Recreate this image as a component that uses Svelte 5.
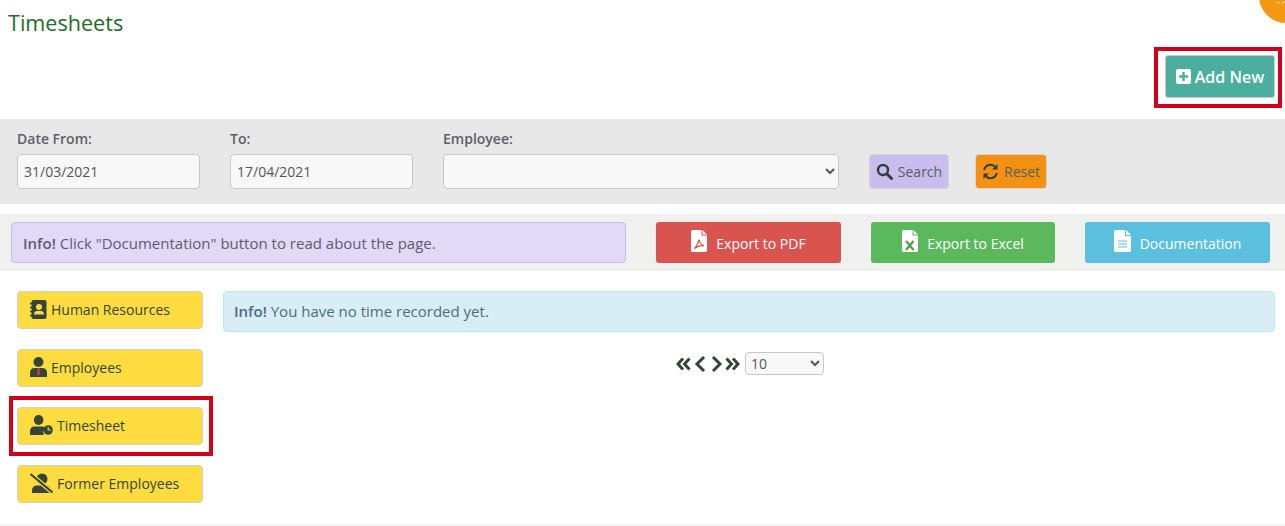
<script>
	const sideItems = [
		{ label: 'Human Resources', icon: 'book', marked: false },
		{ label: 'Employees', icon: 'tie', marked: false },
		{ label: 'Timesheet', icon: 'clock', marked: true },
		{ label: 'Former Employees', icon: 'slash', marked: false }
	];
</script>

<div class="page">
	<span class="badge">
		<svg width="12" height="6" viewBox="0 0 12 6" fill="none" stroke="#fbdc8a" stroke-width="1">
			<path d="M1 1.500l2 2 2-2M6 3.500h2l1-2 2 2" />
		</svg>
	</span>

	<h1 class="title">Timesheets</h1>

	<div class="actions">
		<div class="marked">
			<button class="add-btn">
				<svg width="15" height="15" viewBox="0 0 15 15">
					<rect width="15" height="15" rx="2" fill="#fff" />
					<path d="M6.300 3h2.400v3.300H12v2.400H8.700V12H6.300V8.700H3V6.300h3.300z" fill="#4cae9f" />
				</svg>
				Add New
			</button>
			<span class="mark mark-add"></span>
		</div>
	</div>

	<form class="filters">
		<div class="field date">
			<label for="from">Date From:</label>
			<input id="from" value="31/03/2021" />
		</div>
		<div class="field date">
			<label for="to">To:</label>
			<input id="to" value="17/04/2021" />
		</div>
		<div class="field employee">
			<label for="emp">Employee:</label>
			<select id="emp"><option></option></select>
		</div>
		<button type="button" class="filter-btn search">
			<svg width="17" height="17" viewBox="0 0 17 17" fill="none" stroke="#33403a">
				<circle cx="7" cy="7" r="5" stroke-width="2.400" />
				<path d="M10.800 10.800 15.500 15.500" stroke-width="3" stroke-linecap="round" />
			</svg>
			Search
		</button>
		<button type="button" class="filter-btn reset">
			<svg width="17" height="17" viewBox="0 0 17 17" fill="none" stroke="#33403a" stroke-width="2">
				<path d="M2.200 7A6.400 6.400 0 0 1 13.400 4.200" />
				<path d="M14.800 10A6.400 6.400 0 0 1 3.600 12.800" />
				<path d="M15.500 1v5.500H10z" fill="#33403a" stroke="none" />
				<path d="M1.500 16v-5.500H7z" fill="#33403a" stroke="none" />
			</svg>
			Reset
		</button>
	</form>

	<div class="toolbar">
		<div class="alert purple"><b>Info!</b> Click "Documentation" button to read about the page.</div>
		<button class="export pdf">
			<svg width="16" height="22" viewBox="0 0 16 22">
				<path d="M0 1.500Q0 0 1.500 0H10.500v5.500H16v15Q16 22 14.500 22h-13Q0 22 0 20.500z" fill="#fff" />
				<path d="M11.500 0 16 4.500h-4.500z" fill="#fff" />
				<path d="M3.500 18.500C5.500 16 7.500 13 8 9.500c.5 3 2.500 5.500 5 6.300-3-.3-6.500.2-9.500 2.700z" fill="none" stroke="#d9534f" stroke-width="1.200" />
			</svg>
			Export to PDF
		</button>
		<button class="export excel">
			<svg width="16" height="22" viewBox="0 0 16 22">
				<path d="M0 1.500Q0 0 1.500 0H10.500v5.500H16v15Q16 22 14.500 22h-13Q0 22 0 20.500z" fill="#fff" />
				<path d="M11.500 0 16 4.500h-4.500z" fill="#fff" />
				<path d="M4 11l7.500 9M11.500 11 4 20" stroke="#4f9e45" stroke-width="2.200" />
			</svg>
			Export to Excel
		</button>
		<button class="export docs">
			<svg width="17" height="22" viewBox="0 0 17 22">
				<path d="M0 1.500Q0 0 1.500 0H11v6h6v14.500Q17 22 15.500 22h-14Q0 22 0 20.500z" fill="#fff" />
				<path d="M12 0l5 5h-5z" fill="#fff" />
				<path d="M4 11h9M4 14h9M4 17h9" stroke="#5bc0de" stroke-width="1.200" />
			</svg>
			Documentation
		</button>
	</div>

	<div class="body">
		<nav class="side">
			{#each sideItems as item}
				<div class="marked">
					<button class="side-btn">
						{#if item.icon === 'book'}
							<svg width="17" height="19" viewBox="0 0 17 19">
								<rect width="15" height="19" x="1.500" rx="2" fill="#354536" />
								<path d="M0 3.500h2M0 7.500h2M0 11.500h2M0 15.500h2" stroke="#354536" stroke-width="1.500" />
								<circle cx="9" cy="7" r="3" fill="#ffdd40" />
								<path d="M4 14.500q0-3.500 3-3.500h4q3 0 3 3.500z" fill="#ffdd40" />
							</svg>
						{:else if item.icon === 'tie'}
							<svg width="17" height="20" viewBox="0 0 17 20">
								<circle cx="8.500" cy="5" r="5" fill="#354536" />
								<path d="M0 20v-4Q0 11 5 11h7q5 0 5 5v4z" fill="#354536" />
								<path d="M7.500 11h2l.6 6-1.600 2-1.600-2z" fill="#b0413e" />
							</svg>
						{:else if item.icon === 'clock'}
							<svg width="23" height="20" viewBox="0 0 24 20" preserveAspectRatio="none">
								<circle cx="9" cy="5" r="5" fill="#354536" />
								<path d="M0 20v-3.500Q0 11.500 5 11.500h8q2.500 0 3.500 1.500a6 6 0 0 0-2 7z" fill="#354536" />
								<circle cx="19" cy="15" r="4.800" fill="#354536" />
								<path d="M19 12v3h2.800" stroke="#ffdd40" stroke-width="1.200" fill="none" />
							</svg>
						{:else}
							<svg width="23" height="20" viewBox="0 0 23 20">
								<circle cx="12" cy="6" r="5.500" fill="#354536" />
								<path d="M2 20v-2Q2 12.500 7 12.500h9q4 0 5 4l1 3.500z" fill="#354536" />
								<path d="M0.500 1 22.500 19.500" stroke="#ffdd40" stroke-width="4.500" />
								<path d="M0.500 1 22.500 19.500" stroke="#354536" stroke-width="2" />
							</svg>
						{/if}
						<span>{item.label}</span>
					</button>
					{#if item.marked}<span class="mark mark-side"></span>{/if}
				</div>
			{/each}
		</nav>

		<main class="content">
			<div class="alert blue"><b>Info!</b> You have no time recorded yet.</div>
			<div class="pager">
				<svg width="64" height="16" viewBox="0 0 64 16" fill="none" stroke="#354536" stroke-width="3">
					<path d="M7 2.500 2 8l5 5.500M13.500 2.500 8.500 8l5 5.500" />
					<path d="M28 1 21 8l7 7" />
					<path d="M37 1l7 7-7 7" />
					<path d="M50.500 2.500l5 5.500-5 5.500M57 2.500l5 5.500-5 5.500" />
				</svg>
				<select class="per-page"><option>10</option></select>
			</div>
		</main>
	</div>

	<div class="foot"></div>
</div>

<style>
	:global(body) {
		font-family: 'Open Sans', sans-serif;
		background: #fff;
		color: #555;
	}

	button,
	input,
	select {
		font-family: inherit;
	}

	.page {
		position: relative;
		height: 526px;
		overflow: hidden;
	}

	.badge {
		position: absolute;
		top: -31px;
		right: -28px;
		width: 54px;
		height: 54px;
		border-radius: 50%;
		background: #f49712;
	}

	.badge svg {
		position: absolute;
		top: 31px;
		left: 16px;
	}

	.title {
		margin: 0;
		padding: 9px 8px 0;
		height: 45px;
		box-sizing: border-box;
		font-size: 21.600px;
		line-height: 28px;
		font-weight: 400;
		color: #1f6b2c;
	}

	.actions {
		display: flex;
		justify-content: flex-end;
		align-items: flex-start;
		padding: 10px 10px 0 0;
		height: 74px;
		box-sizing: border-box;
	}

	.marked {
		position: relative;
	}

	.mark {
		position: absolute;
		border: 4px solid #d0021b;
		pointer-events: none;
	}

	.mark-add {
		inset: -8px -7px -10px -11px;
	}

	.mark-side {
		inset: -11px -10px -11px -8px;
	}

	.add-btn {
		display: flex;
		align-items: center;
		justify-content: center;
		gap: 4px;
		width: 110px;
		height: 43px;
		padding: 0;
		background: #4cae9f;
		border: 1px solid #c9c9c9;
		border-radius: 3px;
		color: #fff;
		font-size: 16px;
		font-weight: 600;
	}

	.filters {
		display: flex;
		align-items: flex-start;
		height: 85px;
		box-sizing: border-box;
		padding: 9px 0 0 17px;
		background: #e8e8e8;
	}

	.field {
		display: flex;
		flex-direction: column;
		margin-right: 30px;
	}

	.field label {
		height: 26px;
		font-size: 14px;
		line-height: 21px;
		font-weight: 600;
		color: #5b6068;
	}

	.date {
		width: 183px;
	}

	.employee {
		width: 396px;
	}

	input,
	select {
		box-sizing: border-box;
		border: 1px solid #c8c8c8;
		border-radius: 4px;
		background: #f8f8f8;
		color: #555;
	}

	.field input,
	.field select {
		width: 100%;
		height: 35px;
		padding: 0 6px;
		font-size: 14px;
	}

	.filter-btn {
		display: flex;
		align-items: center;
		justify-content: center;
		gap: 5px;
		height: 35px;
		margin-top: 26px;
		padding: 0;
		border: 1px solid #d4d4d4;
		border-radius: 4px;
		color: #55605a;
		font-size: 14px;
	}

	.search {
		width: 80px;
		background: #c9bdf0;
	}

	.reset {
		width: 72px;
		margin-left: 26px;
		background: #f49112;
	}

	.toolbar {
		display: flex;
		align-items: center;
		height: 57px;
		margin-top: 10px;
		padding-left: 11px;
		background: #f0f0ee;
	}

	.alert {
		box-sizing: border-box;
		border-radius: 4px;
		font-size: 15px;
		line-height: 20px;
		padding: 10px 11px;
	}

	.alert b {
		font-weight: 600;
	}

	.purple {
		width: 615px;
		height: 41px;
		background: #e2d9f7;
		border: 1px solid #c9bdf0;
		color: #5f5a78;
	}

	.export {
		display: flex;
		align-items: center;
		justify-content: center;
		gap: 9px;
		height: 41px;
		padding: 2px 0 0;
		border: 0;
		border-radius: 3px;
		color: #fff;
		font-size: 14px;
	}

	.export svg {
		margin-bottom: 5px;
	}

	.pdf {
		width: 185px;
		margin-left: 30px;
		background: #d9534f;
	}

	.excel {
		width: 184px;
		margin-left: 30px;
		background: #5cb85c;
	}

	.docs {
		width: 185px;
		margin-left: 30px;
		background: #5bc0de;
	}

	.body {
		display: flex;
		padding: 20px 10px 0 17px;
	}

	.side {
		display: flex;
		flex-direction: column;
		gap: 20px;
		width: 186px;
		flex: none;
	}

	.side-btn {
		display: flex;
		align-items: center;
		gap: 4px;
		width: 186px;
		height: 38px;
		padding: 0 0 2px 12px;
		background: #ffdd40;
		border: 1px solid #cfcfcf;
		border-radius: 4px;
		color: #354536;
		font-size: 14px;
	}

	.content {
		flex: 1;
		margin-left: 20px;
	}

	.blue {
		height: 41px;
		padding: 9px 10px;
		background: #d9edf7;
		border: 1px solid #bce8f1;
		color: #4a6f80;
	}

	.pager {
		display: flex;
		align-items: center;
		justify-content: center;
		gap: 5px;
		margin-top: 20px;
		padding-left: 2px;
	}

	.per-page {
		width: 79px;
		height: 23px;
		padding: 0 1px;
		font-size: 14px;
	}

	.foot {
		position: absolute;
		left: 0;
		right: 0;
		bottom: 0;
		height: 2px;
		background: #f5f5f5;
	}
</style>
